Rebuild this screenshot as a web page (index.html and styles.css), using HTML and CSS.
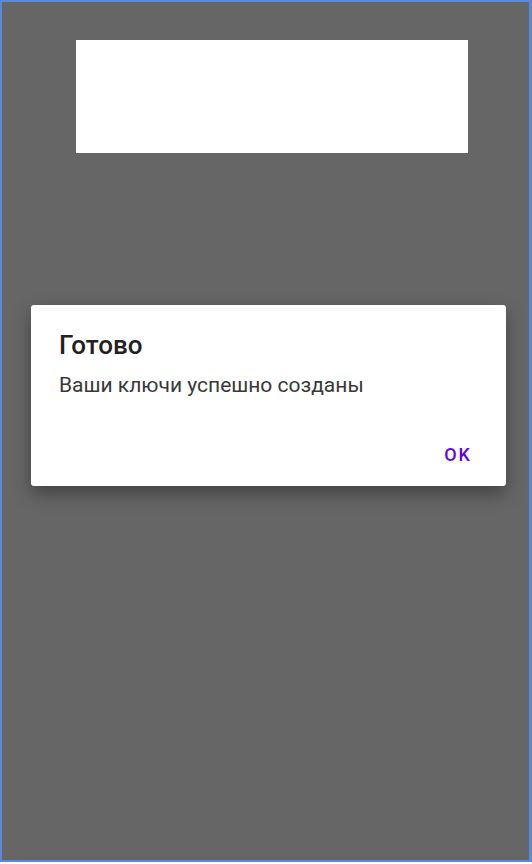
FILE: index.html
```html
<!DOCTYPE html>
<html lang="ru">
<head>
    <meta charset="UTF-8">
    <meta name="viewport" content="width=device-width, initial-scale=1.0">
    <title>Готово</title>
    <link rel="stylesheet" href="styles.css">
</head>
<body>
    <div class="screen">
        <div class="banner"></div>

        <div class="dialog">
            <h2 class="dialog-title">Готово</h2>
            <p class="dialog-text">Ваши ключи успешно созданы</p>
            <div class="dialog-actions">
                <button class="dialog-button">OK</button>
            </div>
        </div>
    </div>
</body>
</html>
```

FILE: styles.css
```css
html, body {
    margin: 0;
    padding: 0;
    background-color: #fff;
}
body {
    font-family: 'Roboto', 'Noto Sans', sans-serif;
    width: 532px;
    height: 864px;
}
.screen {
    box-sizing: border-box;
    width: 532px;
    height: 862px;
    border: 2px solid #5b88d8;
    border-right-width: 3px;
    background-color: #666;
    padding-top: 38px;
    display: flex;
    flex-direction: column;
    align-items: center;
}
.banner {
    width: 392px;
    height: 113px;
    background-color: #fff;
    margin-left: 12px;
}
.dialog {
    box-sizing: border-box;
    width: 475px;
    height: 181px;
    margin-top: 152px;
    margin-left: 6px;
    background-color: #fff;
    border-radius: 3px;
    box-shadow: 0 8px 18px rgba(0,0,0,0.35);
    padding: 24px 28px 0 28px;
    display: flex;
    flex-direction: column;
}
.dialog-title {
    margin: 0;
    font-size: 26px;
    font-weight: 500;
    color: #212121;
    line-height: 32px;
}
.dialog-text {
    margin: 10px 0 0 0;
    font-size: 21px;
    color: #383838;
    line-height: 28px;
}
.dialog-actions {
    display: flex;
    justify-content: flex-end;
    margin-top: 39px;
}
.dialog-button {
    border: none;
    background: none;
    font-family: 'Roboto', sans-serif;
    font-size: 18px;
    font-weight: 500;
    letter-spacing: 2px;
    color: #6200ee;
    padding: 6px 6px 6px 8px;
    margin-right: 0;
}
```
